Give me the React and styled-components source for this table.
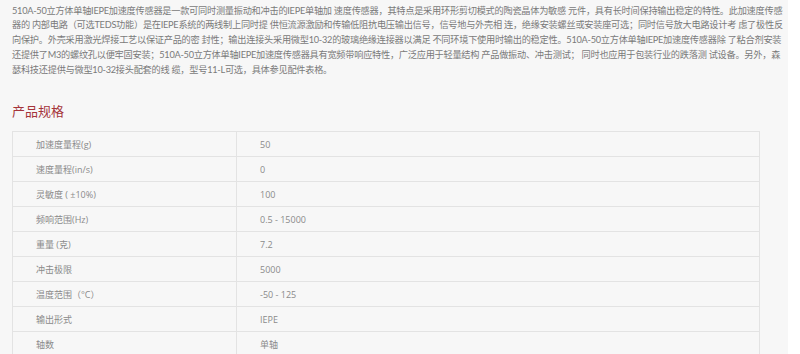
import React from "react";
import styled, { createGlobalStyle } from "styled-components";

const GlobalStyle = createGlobalStyle`
  html, body {
    margin: 0;
    padding: 0;
    background: #ffffff;
  }
  body {
    font-family: "Open Sans", "Noto Sans CJK SC", sans-serif;
  }
`;

const specs = [
  { name: "加速度量程(g)", value: "50" },
  { name: "速度量程(in/s)", value: "0" },
  { name: "灵敏度 ( ±10%)", value: "100" },
  { name: "频响范围(Hz)", value: "0.5 - 15000" },
  { name: "重量 (克)", value: "7.2" },
  { name: "冲击极限", value: "5000" },
  { name: "温度范围（°C）", value: "-50 - 125" },
  { name: "输出形式", value: "IEPE" },
  { name: "轴数", value: "单轴" },
];

function App() {
  return (
    <>
      <GlobalStyle />
      <Panel>
        <Intro>
          510A-50立方体单轴IEPE加速度传感器是一款可同时测量振动和冲击的IEPE单轴加
          速度传感器，其特点是采用环形剪切模式的陶瓷晶体为敏感
          元件，具有长时间保持输出稳定的特性。此加速度传感器的
          内部电路（可选TEDS功能）是在IEPE系统的两线制上同时提
          供恒流源激励和传输低阻抗电压输出信号，信号地与外壳相
          连，绝缘安装螺丝或安装座可选；同时信号放大电路设计考
          虑了极性反向保护。外壳采用激光焊接工艺以保证产品的密
          封性；输出连接头采用微型10-32的玻璃绝缘连接器以满足
          不同环境下使用时输出的稳定性。510A-50立方体单轴IEPE加速度传感器除
          了粘合剂安装还提供了M3的螺纹孔以便牢固安装；510A-50立方体单轴IEPE加速度传感器具有宽频带响应特性，广泛应用于轻量结构
          产品做振动、冲击测试； 同时也应用于包装行业的跌落测
          试设备。另外，森瑟科技还提供与微型10-32接头配套的线
          缆，型号11-L可选，具体参见配件表格。
        </Intro>
        <SectionTitle>产品规格</SectionTitle>
        <SpecTable>
          <tbody>
            {specs.map((s) => (
              <tr key={s.name}>
                <SpecCell $label>{s.name}</SpecCell>
                <SpecCell>{s.value}</SpecCell>
              </tr>
            ))}
          </tbody>
        </SpecTable>
      </Panel>
    </>
  );
}

const Panel = styled.section`
  width: 788px;
  min-height: 354px;
  box-sizing: border-box;
  background: #f7f7f7;
  padding: 3.6px 0 0 12px;
`;

const Intro = styled.p`
  margin: 0;
  padding-right: 1px;
  font-family: "Lato", "Noto Sans CJK SC", sans-serif;
  font-size: 9.2px;
  letter-spacing: -0.26px;
  line-height: 14.8px;
  color: #7a7a7a;
`;

const SectionTitle = styled.h3`
  margin: 24px 0 11.5px;
  font-family: "Noto Sans CJK SC", sans-serif;
  font-size: 13px;
  font-weight: 400;
  line-height: 18px;
  color: #a5343a;
`;

const SpecTable = styled.table`
  width: 748px;
  border-collapse: collapse;
  table-layout: fixed;

  tr {
    height: 25px;
  }
`;

const SpecCell = styled.td`
  width: ${(p) => (p.$label ? "200px" : "auto")};
  padding: 0 0 0 23px;
  border: 1px solid #e3e3e3;
  font-family: "Open Sans", "Noto Sans CJK SC", sans-serif;
  font-size: 9px;
  color: #8a8a8a;
  vertical-align: middle;
`;

export default App;
